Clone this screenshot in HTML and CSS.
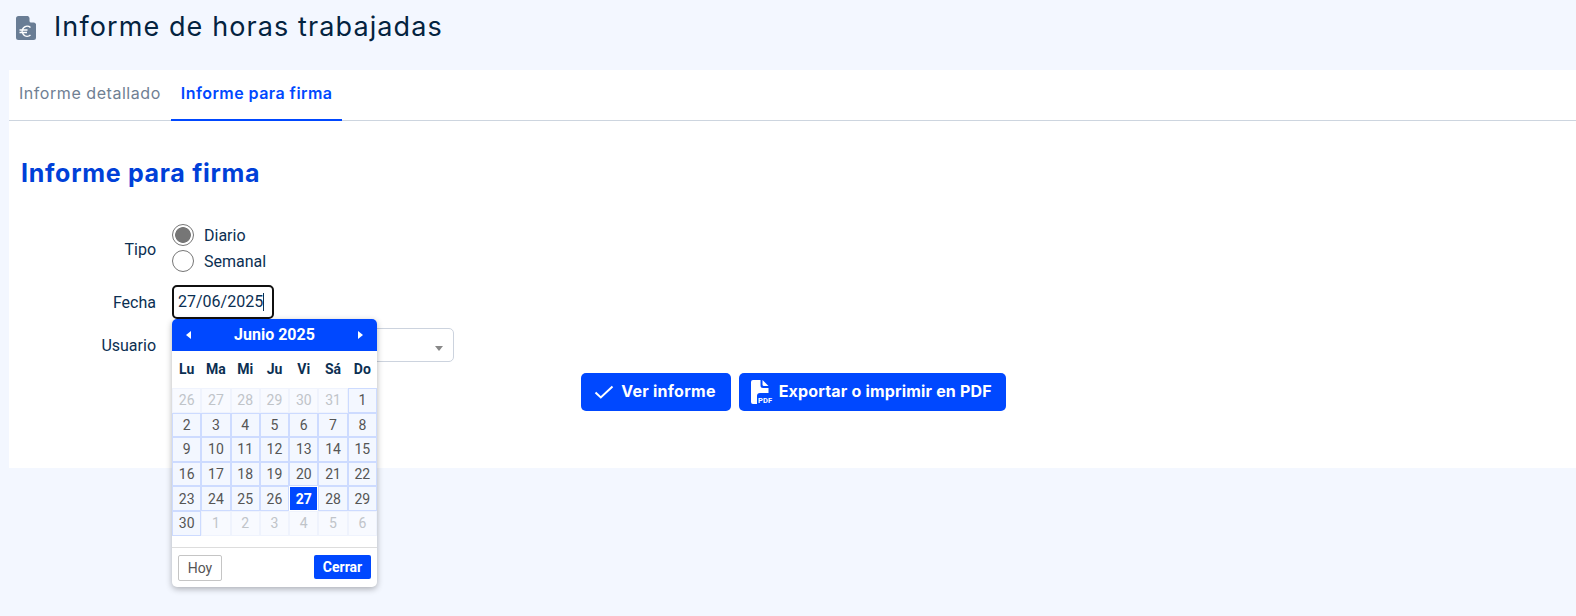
FILE: index.html
```html
<!DOCTYPE html>
<html lang="es">
<head>
    <meta charset="utf-8"/>
    <title>Informe de horas trabajadas</title>
    <link rel="stylesheet" href="styles.css">
</head>
<body>
    <header class="page-header">
        <svg class="page-icon" width="20" height="24" viewBox="0 0 20 24">
            <path d="M2.5 0H12L20 8V21.5A2.5 2.5 0 0 1 17.500 24H2.500A2.500 2.500 0 0 1 0 21.500V2.500A2.500 2.500 0 0 1 2.500 0Z" fill="#697d95"/>
            <path d="M13.500 0.500L19.500 6.500H15A1.500 1.500 0 0 1 13.500 5Z" fill="#f3f7ff"/>
            <path d="M14.500 11.500A5 5 0 1 0 14.500 19M3.500 14H11.500M3.500 16.500H11" fill="none" stroke="#fff" stroke-width="1.500"/>
        </svg>
        <h1 class="page-title">Informe de horas trabajadas</h1>
    </header>

    <main class="card">
        <nav class="tabs">
            <a class="tab">Informe detallado</a>
            <a class="tab active">Informe para firma</a>
        </nav>

        <section class="panel">
            <h2 class="panel-title">Informe para firma</h2>

            <form class="report-form">
                <div class="form-row row-type">
                    <label class="form-label">Tipo</label>
                    <div class="radios">
                        <div class="radio-line"><span class="radio checked"></span>Diario</div>
                        <div class="radio-line"><span class="radio"></span>Semanal</div>
                    </div>
                </div>
                <div class="form-row row-date">
                    <label class="form-label">Fecha</label>
                    <div class="date-wrap">
                        <div class="date-input">27/06/2025<span class="caret"></span></div>
                        <div class="datepicker">
                            <div class="dp-head">
                                <span class="dp-arrow left"></span>
                                <span class="dp-month">Junio 2025</span>
                                <span class="dp-arrow right"></span>
                            </div>
                            <table class="dp-table">
                                <thead>
                                    <tr><th>Lu</th><th>Ma</th><th>Mi</th><th>Ju</th><th>Vi</th><th>Sá</th><th>Do</th></tr>
                                </thead>
                                <tbody>
                                    <tr><td class="off">26</td><td class="off">27</td><td class="off">28</td><td class="off">29</td><td class="off">30</td><td class="off">31</td><td>1</td></tr>
                                    <tr><td>2</td><td>3</td><td>4</td><td>5</td><td>6</td><td>7</td><td>8</td></tr>
                                    <tr><td>9</td><td>10</td><td>11</td><td>12</td><td>13</td><td>14</td><td>15</td></tr>
                                    <tr><td>16</td><td>17</td><td>18</td><td>19</td><td>20</td><td>21</td><td>22</td></tr>
                                    <tr><td>23</td><td>24</td><td>25</td><td>26</td><td class="today">27</td><td>28</td><td>29</td></tr>
                                    <tr><td>30</td><td class="off">1</td><td class="off">2</td><td class="off">3</td><td class="off">4</td><td class="off">5</td><td class="off">6</td></tr>
                                </tbody>
                            </table>
                            <div class="dp-foot">
                                <button type="button" class="dp-today">Hoy</button>
                                <button type="button" class="dp-close">Cerrar</button>
                            </div>
                        </div>
                    </div>
                </div>
                <div class="form-row row-user">
                    <label class="form-label">Usuario</label>
                    <div class="select"><span class="select-arrow"></span></div>
                </div>
            </form>

            <div class="actions">
                <button type="button" class="btn">
                    <svg width="20" height="14" viewBox="0 0 20 14"><path d="M1.500 7.500L6.800 12.500L18.500 1.500" fill="none" stroke="#fff" stroke-width="2"/></svg>
                    Ver informe
                </button>
                <button type="button" class="btn btn-pdf">
                    <svg width="22" height="24" viewBox="0 0 22 24">
                        <path d="M2 0H9.500V5.500A2.500 2.500 0 0 0 12 8H17.500V13H9A3 3 0 0 0 6 16V24H2A2 2 0 0 1 0 22V2A2 2 0 0 1 2 0Z" fill="#fff"/>
                        <path d="M11.500 0L17.500 6H13A1.500 1.500 0 0 1 11.500 4.500Z" fill="#fff"/>
                        <text class="pdf-mark" x="7" y="23">PDF</text>
                    </svg>
                    Exportar o imprimir en PDF
                </button>
            </div>
        </section>
    </main>
</body>
</html>
```

FILE: styles.css
```css
body {
    margin: 0;
    height: 616px;
    overflow: hidden;
    background-color: #f3f7ff;
    font-family: 'Roboto', sans-serif;
    font-size: 16px;
    color: #0b2f52;
}

.page-header {
    display: flex;
    align-items: center;
    gap: 18px;
    height: 54px;
    padding-left: 16px;
    margin-bottom: 16px;
}

.page-icon {
    flex: none;
    margin-top: 1px;
}

.page-title {
    margin: 0 0 1px;
    font-family: 'Inter', sans-serif;
    font-size: 27px;
    font-weight: 400;
    letter-spacing: 1.1px;
    color: #04233f;
}

.card {
    margin-left: 9px;
    height: 398px;
    background-color: white;
}

.tabs {
    display: flex;
    height: 50px;
    border-bottom: 1px solid #cdd5df;
}

.tab {
    display: flex;
    align-items: center;
    padding: 0 10px 3px;
    margin-bottom: -1px;
    font-family: 'Inter', sans-serif;
    font-size: 16px;
    font-weight: 400;
    letter-spacing: 0.55px;
    color: #6f8093;
    border-bottom: 2px solid transparent;
}

.tab.active {
    font-weight: 600;
    letter-spacing: 0.45px;
    color: #0048ff;
    border-bottom-color: #0048ff;
}

.panel {
    padding: 0 12px;
}

.panel-title {
    margin: 0;
    padding-top: 37px;
    height: 31px;
    line-height: 31px;
    font-family: 'Inter', sans-serif;
    font-size: 25px;
    font-weight: 700;
    letter-spacing: 0.7px;
    color: #0040d8;
}

.report-form {
    margin-top: 33px;
}

.form-row {
    display: flex;
    align-items: center;
}

.form-label {
    width: 135px;
    margin-right: 16px;
    text-align: right;
}

.row-type {
    height: 52px;
}

.row-type .form-label {
    padding-top: 2px;
}

.row-date {
    margin-top: 11px;
}

.row-user {
    margin-top: 9px;
}

.radio-line {
    display: flex;
    align-items: center;
    gap: 10px;
    height: 26px;
}

.radio {
    width: 20px;
    height: 20px;
    border: 1px solid #767676;
    border-radius: 50%;
    background-color: white;
}

.radio.checked {
    background: radial-gradient(circle, #767676 0, #767676 7.500px, white 8.200px);
}

.date-wrap {
    position: relative;
}

.date-input {
    box-sizing: border-box;
    width: 102px;
    height: 34px;
    padding-left: 4px;
    line-height: 30px;
    border: 2px solid #101010;
    border-radius: 5px;
}

.caret {
    display: inline-block;
    width: 1px;
    height: 18px;
    vertical-align: -4px;
    background-color: #0b2f52;
}

.datepicker {
    position: absolute;
    left: 0;
    top: 34px;
    z-index: 2;
    width: 205px;
    background-color: white;
    border-radius: 5px;
    box-shadow: 0 2px 6px rgba(0, 0, 0, 0.3);
}

.dp-head {
    display: flex;
    align-items: center;
    justify-content: space-between;
    height: 32px;
    padding: 0 14px;
    background-color: #0048ff;
    border-radius: 5px 5px 0 0;
    color: white;
}

.dp-month {
    margin-bottom: 2px;
    font-weight: 700;
}

.dp-arrow {
    width: 0;
    height: 0;
    border-top: 4px solid transparent;
    border-bottom: 4px solid transparent;
}

.dp-arrow.left {
    border-right: 5px solid white;
}

.dp-arrow.right {
    border-left: 5px solid white;
}

.dp-table {
    width: 100%;
    table-layout: fixed;
    border-collapse: separate;
    border-spacing: 0;
    font-size: 14px;
}

.dp-table th {
    height: 35px;
    padding: 0 0 2px;
    font-weight: 700;
    color: #0b2f52;
}

.dp-table td {
    height: 22.600px;
    padding: 0;
    text-align: center;
    color: #555555;
    background-color: #f3f7ff;
    border: 1px solid #cddbff;
}

.dp-table td.off {
    color: #c0c4c9;
    background-color: #f8faff;
    border-color: #eff3fd;
}

.dp-table td.today {
    font-weight: 700;
    color: white;
    background-color: #0048ff;
    border-color: white;
}

.dp-foot {
    display: flex;
    align-items: flex-start;
    justify-content: space-between;
    margin-top: 11px;
    padding: 7px 6px 6px;
    border-top: 1px solid #dddddd;
}

.dp-today {
    width: 44px;
    height: 26px;
    padding: 0;
    font-family: inherit;
    font-size: 14px;
    color: #555555;
    background-color: white;
    border: 1px solid #c5c5c5;
    border-radius: 2px;
}

.dp-close {
    width: 57px;
    height: 24px;
    padding: 0;
    font-family: inherit;
    font-size: 14px;
    font-weight: 700;
    color: white;
    background-color: #0048ff;
    border: none;
    border-radius: 2px;
}

.select {
    position: relative;
    box-sizing: border-box;
    width: 282px;
    height: 34px;
    background-color: white;
    border: 1px solid #ccd3de;
    border-radius: 5px;
}

.select-arrow {
    position: absolute;
    right: 10px;
    top: 17px;
    border-top: 5px solid #888888;
    border-left: 4px solid transparent;
    border-right: 4px solid transparent;
}

.actions {
    display: flex;
    justify-content: center;
    gap: 8px;
    margin-top: 11px;
    padding-left: 2px;
}

.btn {
    display: flex;
    align-items: center;
    gap: 7px;
    height: 38px;
    padding: 0 15px 2px 13px;
    font-family: 'Inter', sans-serif;
    font-size: 16px;
    font-weight: 700;
    letter-spacing: 0.25px;
    color: white;
    background-color: #0048ff;
    border: none;
    border-radius: 5px;
}

.btn svg {
    margin-top: 2px;
}

.btn-pdf {
    padding-right: 14px;
    letter-spacing: 0.17px;
}

.btn-pdf svg {
    margin-left: -1px;
    margin-right: -1px;
}

.pdf-mark {
    font-family: 'Roboto', sans-serif;
    font-size: 7.500px;
    font-weight: 700;
    fill: #fff;
}
```
